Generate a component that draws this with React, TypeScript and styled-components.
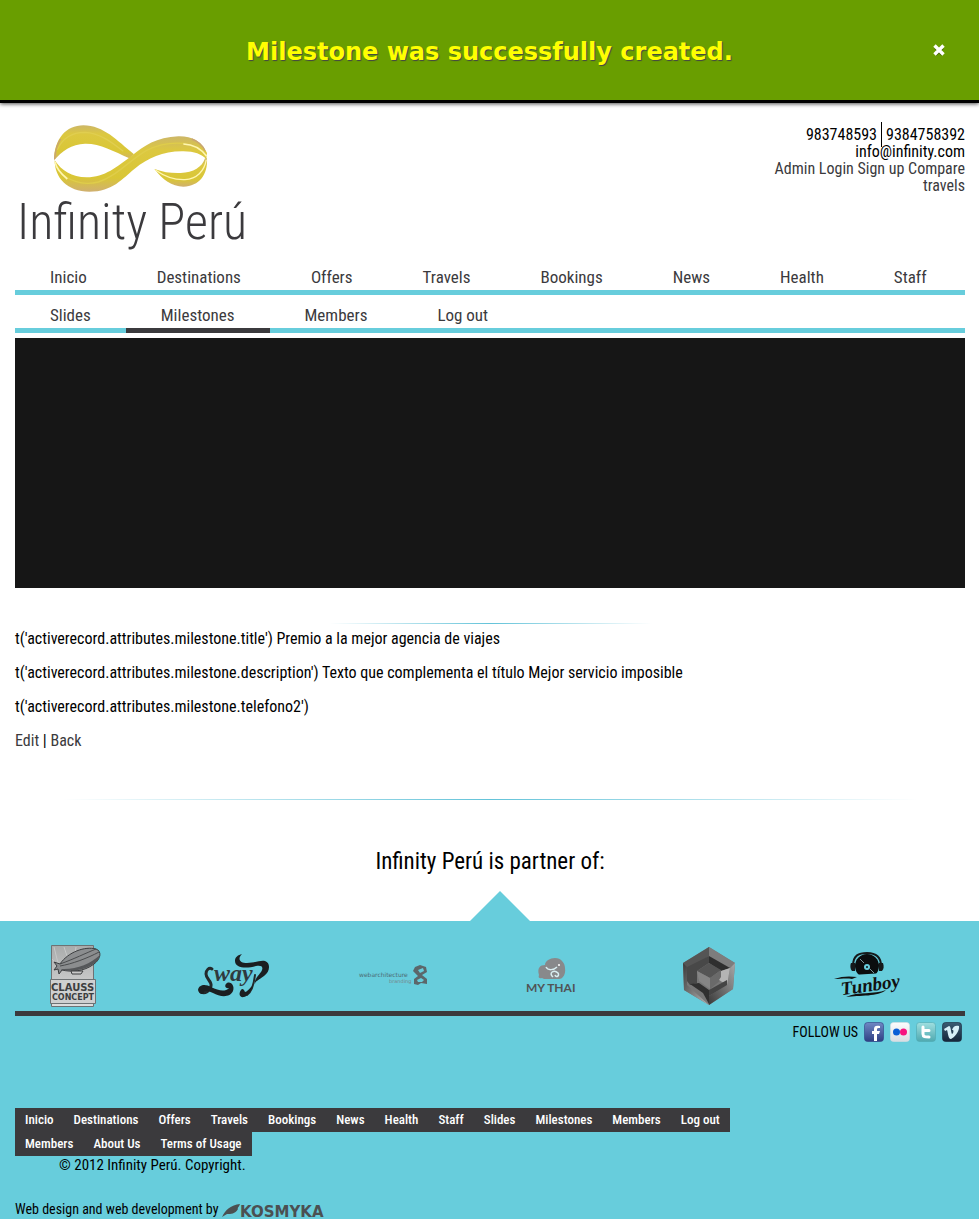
import React from 'react';
import styled, { createGlobalStyle } from 'styled-components';

const cyan = '#67cddc';
const dark = '#3b3a3d';
const condensed = '"Roboto Condensed", "Open Sans", sans-serif';

const GlobalStyle = createGlobalStyle`
  * { box-sizing: border-box; }
  body {
    margin: 0;
    background: #fff;
    color: #000;
    font-family: ${condensed};
    font-size: 16px;
    line-height: 20px;
  }
  a { color: ${dark}; text-decoration: none; }
  ul { list-style: none; margin: 0; padding: 0; }
  p, h1, h2 { margin: 0; font-weight: 400; }
  svg { display: block; flex: none; overflow: visible; }
`;

const Notice = styled.div`
  display: grid;
  grid-template-columns: 80px 1fr 80px;
  align-items: center;
  height: 103px;
  background: #699e00;
  border-bottom: 3px solid #000;
  box-shadow: 0 1px 4px rgba(0, 0, 0, 0.7);
`;

const NoticeText = styled.p`
  grid-column: 2;
  padding-top: 3px;
  text-align: center;
  color: #ff0;
  font: bold 24px/28px "DejaVu Sans", sans-serif;
  text-shadow: 1px 1px 1px #444;
`;

const CloseButton = styled.button`
  justify-self: center;
  display: flex;
  padding: 4px;
  border: 0;
  background: none;
  cursor: pointer;
`;

const Container = styled.div`
  padding: 0 14px 0 15px;
`;

const Header = styled.header`
  display: flex;
  justify-content: space-between;
  align-items: flex-start;
  padding-top: 20px;
`;

const Brand = styled.a`
  display: block;
  padding: 0 0 15px 2px;
`;

const Emblem = styled.svg`
  margin-left: 33px;
`;

const BrandName = styled.h1`
  font-size: 50px;
  font-weight: 300;
  line-height: 54px;
`;

const Contact = styled.div`
  width: 200px;
  padding-top: 3px;
  text-align: right;
  line-height: 17px;
`;

const Phone = styled.span<{ $divided?: boolean }>`
  padding: 3px 0 3px 4px;
  ${(p) => p.$divided && `padding-right: 4px; border-right: 1px solid #000;`}
`;

const NavBar = styled.ul`
  display: flex;
  flex-wrap: wrap;
  box-shadow: inset 0 -5px 0 ${cyan};
  & + & { margin-top: 7px; }
`;

const NavLink = styled.a<{ $active?: boolean }>`
  display: block;
  padding: 0 35px;
  font-size: 17px;
  line-height: 26px;
  border-bottom: 5px solid ${(p) => (p.$active ? dark : 'transparent')};
`;

const Slideshow = styled.div`
  height: 250px;
  margin-top: 5px;
  background: #161616;
`;

const Rule = styled.hr<{ $wide?: boolean }>`
  width: ${(p) => (p.$wide ? '90%' : '34%')};
  height: 1px;
  margin: ${(p) => (p.$wide ? '48px auto 47px' : '35px auto 5px')};
  border: 0;
  background: linear-gradient(to right, rgba(90, 190, 215, 0), #63c3d9 50%, rgba(90, 190, 215, 0));
`;

const Details = styled.main`
  display: flex;
  flex-direction: column;
  gap: 14px;
`;

const PartnersTitle = styled.h2`
  text-align: center;
  font-size: 23px;
  line-height: 30px;
`;

const Arrow = styled.div`
  width: 0;
  margin: 14px 0 0 calc(50% - 20px);
  border: solid transparent;
  border-width: 0 30px 30px;
  border-bottom-color: ${cyan};
`;

const Footer = styled.footer`
  padding: 24px 14px 0 15px;
  background: ${cyan};
`;

const Partners = styled.ul`
  display: grid;
  grid-template-columns: repeat(6, 1fr);
  padding-bottom: 4px;
  border-bottom: 5px solid ${dark};
`;

const Partner = styled.li`
  display: flex;
  align-items: center;
  justify-content: center;
  height: 62px;
  padding-right: 36px;
`;

const Follow = styled.div`
  display: flex;
  justify-content: flex-end;
  align-items: center;
  gap: 6px;
  height: 24px;
  margin-top: 4px;
  padding-right: 3px;
  font-size: 14px;
`;

const FooterNav = styled.ul`
  display: flex;
  flex-wrap: wrap;
  max-width: 720px;
  margin-top: 64px;
`;

const FooterLink = styled.a`
  display: block;
  padding: 0 10px;
  background: ${dark};
  color: #fff;
  font-size: 13px;
  font-weight: 500;
  line-height: 24px;
`;

const Copyright = styled.p`
  margin-left: 44px;
  font-size: 15px;
  line-height: 18px;
`;

const Credits = styled.p`
  display: flex;
  align-items: center;
  margin-top: 25px;
  font-size: 14px;
`;

const InfinityEmblem = () => (
  <Emblem width="160" height="72" viewBox="150 40 480 216" aria-hidden="true">
    <defs>
      <linearGradient id="gold" x1="0" y1="0" x2="0" y2="1">
        <stop offset="0" stopColor="#cdb768" />
        <stop offset="0.25" stopColor="#dcc840" />
        <stop offset="0.75" stopColor="#d9c636" />
        <stop offset="1" stopColor="#d0b070" />
      </linearGradient>
    </defs>
    <path fill="url(#gold)" d="M162 152C163 88 198 47 250 47C312 48 350 92 402 134L388 146C340 124 300 101 255 102C215 103 185 125 162 152Z" />
    <path fill="none" stroke="#e0ce50" strokeWidth="4" d="M172 120C190 80 220 68 255 68C300 70 335 98 370 125" />
    <path fill="url(#gold)" d="M463 178C490 188 515 191 542 190C580 189 607 172 615 146L621 146C624 195 598 230 550 231C515 230 488 210 463 178Z" />
    <path fill="none" stroke="#fff6b0" strokeWidth="4" d="M466 181C500 205 530 211 555 210C590 208 613 185 619 150" />
    <path fill="url(#gold)" d="M164 152C164 205 202 246 268 246C338 246 368 206 404 177C445 145 490 124 550 125C584 125 604 134 619 148L621 130C605 95 575 79 535 80C470 82 430 110 398 136C350 172 315 203 260 203C215 203 184 182 164 152Z" />
    <path fill="none" stroke="#dfcd4a" strokeWidth="4" d="M190 196C220 220 260 226 295 217C350 200 390 150 440 122C480 102 520 97 560 102" />
    <path fill="none" stroke="#fff6b0" strokeWidth="5" d="M165 157C170 178 182 192 202 208M550 103C580 104 604 118 620 140" />
    <path fill="none" stroke="#c9a572" strokeWidth="4" d="M164 148C166 120 172 102 182 88M615 124C607 105 592 94 575 88" />
  </Emblem>
);

const CloseIcon = () => (
  <svg width="14" height="14" viewBox="0 0 14 14" aria-hidden="true">
    <path d="M3.5 4.5L10.5 11.5M10.5 4.5L3.5 11.5" stroke="#3f5f00" strokeWidth="3.4" />
    <path d="M2.5 2.5L11.5 11.5M11.5 2.5L2.5 11.5" stroke="#fff" strokeWidth="3.4" />
  </svg>
);

const ClaussLogo = () => (
  <svg width="52" height="62" viewBox="0 0 52 62" role="img" aria-label="Clauss Concept">
    <defs>
      <linearGradient id="plate" x1="0" y1="0" x2="0" y2="1">
        <stop offset="0" stopColor="#a9abab" />
        <stop offset="1" stopColor="#dedede" />
      </linearGradient>
    </defs>
    <path d="M1.5 0.5H43.5V61.5H1.5Z" fill="url(#plate)" stroke="#6d7274" />
    <path d="M12 34L4 2M20 20L14 2M24 16L26 2M14 26L2 14" stroke="#c6c8c8" />
    <path d="M10 19C18 7 35 1 46 4C52 6 51 14 44 19C34 27 20 27 12 25L9 29L8 24L4 25L7 21L4 17Z" fill="#8b8d8f" stroke="#3c3e40" />
    <path d="M10 21C22 19 38 13 49 7M10 19C24 14 36 8 46 4" fill="none" stroke="#4a4c4e" />
    <path d="M11 24C26 25 40 19 50 10L48 15C38 25 24 27 12 25Z" fill="#55575a" />
    <path d="M21 26H33L31 29H22Z" fill="#c9c9c9" stroke="#3c3e40" />
    <path d="M0.5 34.5H45.5V58.5H0.5Z" fill="#cfd0d0" stroke="#6d7274" />
    <text x="1" y="46" fontFamily="DejaVu Sans" fontWeight="bold" fontSize="10" fill="#3d3e40">CLAUSS</text>
    <text x="2" y="55" fontFamily="DejaVu Sans" fontWeight="bold" fontSize="8" fill="#3d3e40">CONCEPT</text>
  </svg>
);

const SwayLogo = () => (
  <svg width="72" height="44" viewBox="0 0 72 44" role="img" aria-label="Sway">
    <g fill="none" stroke="#23292b" strokeLinecap="round">
      <path strokeWidth="3" d="M14 15C11 13 8 16 8 20C8 25 14 27 13 32C12 37 7 40 3 38" />
      <path strokeWidth="2" d="M57 21C56 29 54 38 49 41" />
    </g>
    <g fill="#1b1f21">
      <path d="M0 36C1 30 8 30 13 33C21 37 27 38 31 34C27 35 26 31 29 29C33 27 37 32 35 37C32 44 22 43 15 39C11 37 7 36 6 38C6 41 1 41 0 36Z" />
      <path d="M44 0C39 5 42 9 49 9C57 9 62 6 67 7C73 9 72 18 66 22C61 26 57 27 57 30C56 26 60 22 63 18C66 13 64 11 58 12C48 15 37 14 37 7C37 3 40 1 44 0Z" />
      <path d="M43 36C40 40 42 44 46 43C50 42 53 37 55 31C51 35 49 38 47 38C46 35 44 34 43 36Z" />
    </g>
    <text x="16" y="27" fontFamily="Liberation Serif" fontStyle="italic" fontWeight="bold" fontSize="24" fill="#2f3a3e">way</text>
  </svg>
);

const WebArchLogo = () => (
  <svg width="70" height="22" viewBox="0 0 70 22" role="img" aria-label="Webarchitecture branding">
    <text x="1" y="12" fontFamily="DejaVu Sans" fontSize="6" fill="#4c6c74">webarchitecture</text>
    <text x="31" y="18" fontFamily="DejaVu Sans" fontSize="5" fill="#77858a">branding</text>
    <path d="M57 2L62 0L68 2L69 7L64 10L69 14V19L63 18L60 20L56 19V14L60 11L55 6Z" fill="#5c666a" />
    <path d="M60 5L65 3L66 6L62 8Z M59 15L63 13L66 15L64 17L60 17Z" fill={cyan} />
  </svg>
);

const MyThaiLogo = () => (
  <svg width="50" height="36" viewBox="0 0 50 36" role="img" aria-label="My Thai">
    <path d="M13 17C11 10 14 7 19 7C19 3 24 0 29 0C35 0 39 5 39 10C40 16 37 21 33 21H18L16 20C13 21 12 19 13 17Z" fill="#88898b" />
    <path d="M20 9C22 13 28 12 31 9M27 19C22 15 28 11 32 15C34 18 30 20 29 17" fill="none" stroke="#d9eef1" strokeWidth="1.5" />
    <circle cx="33" cy="7" r="1" fill="#fff" />
    <text x="0" y="34" fontFamily="Lato" fontSize="12" fontWeight="bold" fill="#515456">MY THAI</text>
  </svg>
);

const CubeLogo = () => (
  <svg width="52" height="58" viewBox="0 0 52 58" role="img" aria-label="Cube">
    <defs>
      <linearGradient id="left" x1="0" y1="0" x2="1" y2="1">
        <stop offset="0" stopColor="#3b3b3b" />
        <stop offset="1" stopColor="#b5b5b5" />
      </linearGradient>
      <linearGradient id="right" x1="0" y1="1" x2="1" y2="0">
        <stop offset="0" stopColor="#3a3a3a" />
        <stop offset="1" stopColor="#a8a8a8" />
      </linearGradient>
    </defs>
    <path d="M26 0L52 16L50 42L26 58L1 43L0 16Z" fill="#777" />
    <path d="M0 16L26 0V9L4 23Z" fill="#555" />
    <path d="M26 0L52 16L47 21L26 9Z" fill="#7d7d7d" />
    <path d="M0 16L4 20V38L26 58L1 43Z" fill="url(#left)" />
    <path d="M52 16L47 21L44 38L26 49V58L50 42Z" fill="url(#right)" />
    <path d="M4 20L26 9L26 16L14 24V36L7 38L4 34Z" fill="#484848" />
    <path d="M26 9L47 21L38 24L26 16Z" fill="#2f2f2f" />
    <path d="M26 16L38 23L27 31L14 24Z" fill="#555" />
    <path d="M14 24L27 31V42L16 34Z" fill="#858585" />
    <path d="M27 31L38 23V33L27 42Z" fill="#6a6a6a" />
    <path d="M38 24L47 21L44 38L36 33L38 30Z" fill="#b4b4b4" />
    <path d="M7 37L16 36L26 43V57L20 46Z" fill="#303030" />
    <path d="M26 43L44 33V38L26 49Z" fill="#444" />
  </svg>
);

const TunboyLogo = () => (
  <svg width="68" height="50" viewBox="0 0 68 50" role="img" aria-label="Tunboy">
    <path d="M19 15C19 4 25 2 33 2C42 2 47 6 47 15" fill="none" stroke="#161a1b" strokeWidth="2" />
    <circle cx="33" cy="15" r="12" fill="#0b0d0e" />
    <path d="M26 8L30 12M36 18L40 22" stroke="#7d9499" strokeWidth="1" />
    <circle cx="33" cy="16" r="3" fill={cyan} />
    <circle cx="33" cy="16" r="1" fill="#0b0d0e" />
    <path d="M17 12H21V20H18C16 18 16 14 17 12ZM45 12H49C50 15 50 18 48 20H45Z" fill="#161a1b" />
    <path d="M18 24L50 22V30H18Z" fill={cyan} />
    <path d="M0 28C8 25 16 25 23 26L18 28C12 27 7 28 0 28Z" fill="#111" />
    <text x="7" y="41" transform="rotate(-8 30 38)" fontFamily="Liberation Serif" fontStyle="italic" fontWeight="bold" fontSize="19" fill="#111">Tunboy</text>
    <path d="M12 46C24 40 40 44 52 39C44 46 26 44 12 46Z" fill="#111" />
  </svg>
);

const badges = {
  Facebook: ['#6f88c4', '#2e3f83'],
  Flickr: ['#fbfcfd', '#d9dde2'],
  Twitter: ['#9fdfe0', '#4fa9b0'],
  Vimeo: ['#3a5b73', '#16263a'],
};

const BadgeIcon = ({ name, children }: { name: keyof typeof badges; children: React.ReactNode }) => (
  <a href="#" aria-label={name}>
    <svg width="20" height="20" viewBox="0 0 20 20" aria-hidden="true">
      <defs>
        <linearGradient id={name} x1="0" y1="0" x2="0" y2="1">
          <stop offset="0" stopColor={badges[name][0]} />
          <stop offset="1" stopColor={badges[name][1]} />
        </linearGradient>
      </defs>
      <rect x="0.5" y="0.5" width="19" height="19" rx="3" fill={`url(#${name})`} stroke={badges[name][1]} strokeOpacity="0.6" />
      {children}
    </svg>
  </a>
);

const KosmykaLogo = () => (
  <svg width="106" height="20" viewBox="0 0 106 20" role="img" aria-label="Kosmyka">
    <path d="M0 18C3 11 9 6 18 5C17 8 15 9 16 10C13 15 9 15 5 15Z" fill="#4b5052" />
    <text x="18" y="18" fontFamily="DejaVu Sans" fontWeight="bold" fontSize="15" fill="#4b5052">KOSMYKA</text>
  </svg>
);

const mainLinks = ['Inicio', 'Destinations', 'Offers', 'Travels', 'Bookings', 'News', 'Health', 'Staff'];
const adminLinks = ['Slides', 'Milestones', 'Members', 'Log out'];
const footerLinks = [...mainLinks, ...adminLinks, 'Members', 'About Us', 'Terms of Usage'];
const partners = [ClaussLogo, SwayLogo, WebArchLogo, MyThaiLogo, CubeLogo, TunboyLogo];

export default function App() {
  return (
    <>
      <GlobalStyle />
      <Notice role="status">
        <NoticeText>Milestone was successfully created.</NoticeText>
        <CloseButton type="button" aria-label="Close"><CloseIcon /></CloseButton>
      </Notice>
      <Container>
        <Header>
          <Brand href="#">
            <InfinityEmblem />
            <BrandName>Infinity Perú</BrandName>
          </Brand>
          <Contact>
            <p><Phone $divided>983748593</Phone><Phone>9384758392</Phone></p>
            <p>info@infinity.com</p>
            <p><a href="#">Admin Login</a> <a href="#">Sign up</a> <a href="#">Compare travels</a></p>
          </Contact>
        </Header>
        <nav>
          <NavBar>
            {mainLinks.map((label) => <li key={label}><NavLink href="#">{label}</NavLink></li>)}
          </NavBar>
          <NavBar>
            {adminLinks.map((label) => (
              <li key={label}><NavLink href="#" $active={label === 'Milestones'}>{label}</NavLink></li>
            ))}
          </NavBar>
        </nav>
        <Slideshow />
        <Rule />
        <Details>
          <p>t('activerecord.attributes.milestone.title') Premio a la mejor agencia de viajes</p>
          <p>t('activerecord.attributes.milestone.description') Texto que complementa el título Mejor servicio imposible</p>
          <p>t('activerecord.attributes.milestone.telefono2')</p>
          <p><a href="#">Edit</a> | <a href="#">Back</a></p>
        </Details>
        <Rule $wide />
        <PartnersTitle>Infinity Perú is partner of:</PartnersTitle>
      </Container>
      <Arrow />
      <Footer>
        <Partners>
          {partners.map((Logo, i) => <Partner key={i}><Logo /></Partner>)}
        </Partners>
        <Follow>
          <span>FOLLOW US</span>
          <BadgeIcon name="Facebook">
            <path d="M10 19V12H8V9H10V7C10 4 12 3 16 4V6C14 6 13 6 13 7V9H16L15 12H13V19Z" fill="#fff" />
          </BadgeIcon>
          <BadgeIcon name="Flickr">
            <circle cx="6.5" cy="10" r="3.5" fill="#0a5fd6" />
            <circle cx="13.5" cy="10" r="3.5" fill="#f7127e" />
          </BadgeIcon>
          <BadgeIcon name="Twitter">
            <path d="M7 5V12C7 15 9 15 13 15M7 8.5H13" fill="none" stroke="#fff" strokeWidth="3" strokeLinecap="round" />
          </BadgeIcon>
          <BadgeIcon name="Vimeo">
            <path d="M2 7L7 4C9 4 9 11 10 12C11 12 12 9 11 8L10 8C11 4 14 3 17 4C18 9 12 16 9 17C6 17 6 10 5 8L3 9Z" fill="#d8f0f8" />
          </BadgeIcon>
        </Follow>
        <FooterNav>
          {footerLinks.map((label, i) => <li key={i}><FooterLink href="#">{label}</FooterLink></li>)}
        </FooterNav>
        <Copyright>© 2012 Infinity Perú. Copyright.</Copyright>
        <Credits>Web design and web development by&nbsp;<a href="#"><KosmykaLogo /></a></Credits>
      </Footer>
    </>
  );
}
